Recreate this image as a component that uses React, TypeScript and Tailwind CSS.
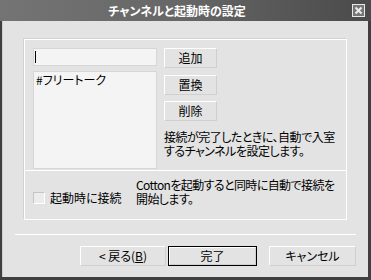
import React from 'react'

function Btn({ children, className = '' }: { children: React.ReactNode; className?: string }) {
  return (
    <div
      className={`flex items-center justify-center border border-t-white border-l-white border-r-[#cfcfcf] border-b-[#cfcfcf] bg-[#e3e3e3] text-[12px] leading-none ${className}`}
    >
      {children}
    </div>
  )
}

export default function App() {
  return (
    <div className="w-[371px] h-[280px] bg-[#3f3f3f] pl-[2px] pr-[3px] pb-[3px] flex flex-col font-['Noto_Sans_CJK_JP',sans-serif] text-black [font-feature-settings:'palt'] select-none">
      {/* title bar */}
      <div className="h-[21px] -ml-[2px] -mr-[3px] flex items-center bg-gradient-to-r from-[#747474] via-[#666666] to-[#4a4a4a]">
        <div className="flex-1 text-center text-white font-bold text-[12px] leading-none pl-[2px]">
          チャンネルと起動時の設定
        </div>
        <div className="w-[13px] h-[13px] mr-[6px] border border-[#e8e8e8] bg-[#767676] flex items-center justify-center">
          <svg width="9" height="9" viewBox="0 0 9 9">
            <path d="M1.5 1.5 L7.5 7.5 M7.5 1.5 L1.5 7.5" stroke="#ececec" strokeWidth="2" />
          </svg>
        </div>
      </div>

      {/* body */}
      <div className="flex-1 bg-[#e3e3e3] border-l border-[#cdcdcd] flex flex-col">
        {/* group box */}
        <div className="mt-[18px] ml-[21px] w-[323px] h-[181px] border border-white shadow-[-1px_-1px_0_#d2d2d2] flex flex-col">
          <div className="flex pl-[8px] pt-[8px] h-[136px] border-b border-white">
            <div className="w-[124px] flex flex-col gap-[5px]">
              <div className="h-[18px] bg-[#f4f4f4] border border-[#d6d6d6] flex items-center pl-[1px]">
                <div className="w-[1px] h-[12px] bg-black" />
              </div>
              <div className="h-[98px] bg-[#f4f4f4] border border-[#d6d6d6] px-[2px] pt-[1px] text-[12px] leading-[13px]">
                #フリートーク
              </div>
            </div>
            <div className="ml-[7px] flex flex-col">
              <Btn className="w-[53px] h-[20px]">追加</Btn>
              <Btn className="w-[53px] h-[20px] mt-[7px]">置換</Btn>
              <Btn className="w-[53px] h-[20px] mt-[6px]">削除</Btn>
              <div className="mt-[9px] text-[12px] leading-[13px] whitespace-nowrap tracking-[-0.5px]">
                <div className="h-[13px]">接続が完了したときに、自動で入室</div>
                <div className="h-[13px] mt-[1px]">するチャンネルを設定します。</div>
              </div>
            </div>
          </div>
          <div className="flex pl-[8px] pt-[6px]">
            <div className="flex items-center h-[42px] w-[103px]">
              <div className="w-[12px] h-[12px] bg-[#ececec] border border-t-[#c4c4c4] border-l-[#c4c4c4] border-r-white border-b-white" />
              <span className="ml-[5px] text-[12px] leading-none">起動時に接続</span>
            </div>
            <div className="text-[12px] leading-[13px] whitespace-nowrap pt-[1px] tracking-[-0.6px]">
              <div className="h-[13px]">Cottonを起動すると同時に自動で接続を</div>
              <div className="h-[13px] mt-[1px]">開始します。</div>
            </div>
          </div>
        </div>

        {/* separator */}
        <div className="mt-[14px] ml-[12px] w-[341px] h-[1px] bg-white" />

        {/* footer buttons */}
        <div className="mt-[11px] ml-[77px] flex">
          <Btn className="w-[86px] h-[20px]">&lt; 戻る(<span className="underline">B</span>)</Btn>
          <div className="ml-[2px] w-[89px] h-[20px] border border-black">
            <Btn className="w-full h-full">完了</Btn>
          </div>
          <Btn className="ml-[12px] w-[87px] h-[20px]">キャンセル</Btn>
        </div>
      </div>
    </div>
  )
}
